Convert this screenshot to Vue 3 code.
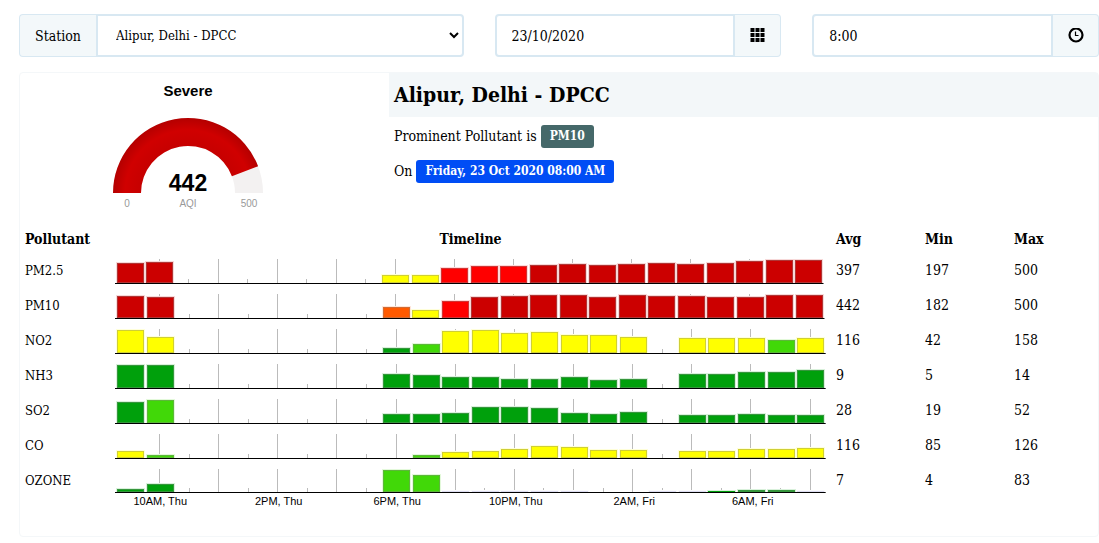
<script setup>
import { ref } from 'vue'

const station = ref('Alipur, Delhi - DPCC')
const date = ref('23/10/2020')
const time = ref('8:00')

const colours = {
  g: '#00a00c',
  l: '#41d808',
  y: '#ffff00',
  o: '#ff5a00',
  r: '#ff0000',
  d: '#cc0000',
  f: '#dcdcf0'
}

const gap = n => Array(n).fill(0)

// heights and shades hold one entry per hour, from 9AM to 8AM
const rows = [
  { name: 'PM2.5', avg: 397, min: 197, max: 500, pitch: 29.48, base: 24,
    heights: [20, 21, ...gap(7), 8, 8, 15, 17, 17, 18, 19, 18, 19, 20, 19, 20, 22, 23, 23],
    shades: 'dd-------yyrrrdddddddddd' },
  { name: 'PM10', avg: 442, min: 182, max: 500, pitch: 29.52, base: 24,
    heights: [22, 21, ...gap(7), 11, 8, 17, 21, 22, 23, 23, 21, 23, 22, 22, 21, 21, 23, 23],
    shades: 'dd-------oyrdddddddddddd' },
  { name: 'NO2', avg: 116, min: 42, max: 158, pitch: 29.57, base: 24,
    heights: [23, 16, ...gap(7), 5, 9, 22, 23, 20, 21, 18, 18, 16, 0, 15, 15, 15, 13, 15],
    shades: 'yy-------glyyyyyyy-yyyly' },
  { name: 'NH3', avg: 9, min: 5, max: 14, pitch: 29.57, base: 24,
    heights: [23, 23, ...gap(7), 14, 13, 11, 11, 9, 9, 11, 8, 9, 0, 14, 14, 16, 16, 18],
    shades: 'gg-------ggggggggg-ggggg' },
  { name: 'SO2', avg: 28, min: 19, max: 52, pitch: 29.57, base: 24,
    heights: [21, 23, ...gap(7), 9, 9, 10, 16, 16, 15, 10, 9, 11, 0, 8, 8, 9, 8, 8],
    shades: 'gl-------ggggggggg-ggggg' },
  { name: 'CO', avg: 116, min: 85, max: 126, pitch: 29.57, base: 24,
    heights: [7, 3, ...gap(7), 0, 3, 6, 7, 9, 12, 11, 8, 8, 0, 7, 7, 9, 9, 10],
    shades: 'yl--------lyyyyyyy-yyyyy' },
  { name: 'OZONE', avg: 7, min: 4, max: 83, pitch: 29.57, base: 23,
    heights: [3, 8, ...gap(7), 22, 17, 1, 1, 1, 1, 1, 0, 0, 1, 1, 1, 2, 2, 1],
    shades: 'gg-------llfffff--ffgggf' }
]

const hours = ['10AM, Thu', '2PM, Thu', '6PM, Thu', '10PM, Thu', '2AM, Fri', '6AM, Fri']

const barX = (row, i) => Math.round(2 + row.pitch * i)
const centre = (row, i) => Math.floor(15 + row.pitch * i)
const bars = row => row.heights
  .map((h, i) => ({ i, h, x: barX(row, i), y: row.base - h, fill: colours[row.shades[i]] }))
  .filter(b => b.h > 0)
</script>

<template>
  <main class="page">
    <form class="controls" @submit.prevent>
      <div class="group">
        <label class="addon" for="station">Station</label>
        <select id="station" v-model="station" class="field select">
          <option>Alipur, Delhi - DPCC</option>
        </select>
      </div>
      <div class="group">
        <input id="date" v-model="date" class="field" type="text" aria-label="Date">
        <button class="addon icon" type="button" aria-label="Choose date">
          <svg width="15" height="15" viewBox="0 0 15 15">
            <template v-for="r in 3" :key="r">
              <rect v-for="c in 3" :key="c" :x="(c - 1) * 5 + 0.5" :y="(r - 1) * 5" width="4" height="4" />
            </template>
          </svg>
        </button>
      </div>
      <div class="group">
        <input id="time" v-model="time" class="field" type="text" aria-label="Time">
        <button class="addon icon" type="button" aria-label="Choose time">
          <svg width="16" height="16" viewBox="0 0 16 16" fill="none" stroke="#000">
            <circle cx="8" cy="7" r="6.5" stroke-width="2.2" />
            <path d="M7.5 3.5V7.5H10.5" stroke-width="1.2" />
          </svg>
        </button>
      </div>
    </form>

    <section class="card">
      <div class="summary">
        <div class="gauge">
          <h2 class="level">Severe</h2>
          <svg class="dial" width="152" height="92" viewBox="0 0 152 92">
            <defs>
              <radialGradient id="red" gradientUnits="userSpaceOnUse" cx="76" cy="76" r="75">
                <stop offset="0.62" stop-color="#c60000" />
                <stop offset="0.84" stop-color="#d00000" />
                <stop offset="1" stop-color="#b40000" />
              </radialGradient>
            </defs>
            <path d="M1 76A75 75 0 0 1 151 76H123A47 47 0 0 0 29 76Z" fill="#f3f1f1" />
            <path d="M1 76A75 75 0 0 1 146.1 49.3L119.9 59.2A47 47 0 0 0 29 76Z" fill="url(#red)" />
            <text class="value" x="76" y="74">442</text>
            <text class="mark" x="15" y="90">0</text>
            <text class="mark" x="76" y="90">AQI</text>
            <text class="mark" x="137" y="90">500</text>
          </svg>
        </div>
        <div class="details">
          <h1 class="title">Alipur, Delhi - DPCC</h1>
          <p class="line">Prominent Pollutant is <span class="badge slate">PM10</span></p>
          <p class="line">On <span class="badge blue">Friday, 23 Oct 2020 08:00 AM</span></p>
        </div>
      </div>

      <table class="data">
        <colgroup>
          <col class="name-col">
          <col>
          <col class="num-col">
          <col class="num-col">
          <col class="num-col">
        </colgroup>
        <thead>
          <tr>
            <th>Pollutant</th>
            <th class="middle">Timeline</th>
            <th>Avg</th>
            <th>Min</th>
            <th>Max</th>
          </tr>
        </thead>
        <tbody>
          <tr v-for="row in rows" :key="row.name">
            <td>{{ row.name }}</td>
            <td class="timeline">
              <svg class="chart" viewBox="0 0 711 25" preserveAspectRatio="none">
                <rect
                  v-for="i in 24" :key="i" class="tick"
                  :x="centre(row, i - 1)" :y="i % 2 ? row.base - 4 : 0"
                  width="1" :height="i % 2 ? 4 : row.base"
                />
                <g v-for="b in bars(row)" :key="b.i">
                  <rect :x="b.x - 1" :y="b.y - 1" width="29" :height="b.h + 1" class="halo-base" />
                  <rect :x="b.x - 1" :y="b.y - 1" width="29" :height="b.h + 1" :fill="b.fill" class="halo" />
                  <rect :x="b.x" :y="b.y" width="27" :height="b.h" :fill="b.fill" />
                  <rect v-if="b.h > 1" :x="b.x + 0.5" :y="b.y + 0.5" width="26" :height="b.h - 1" class="edge" />
                </g>
                <rect x="0" :y="row.base" :width="row.pitch * 24 + 1" height="1" />
              </svg>
              <div v-if="row.name === 'OZONE'" class="axis">
                <span v-for="hour in hours" :key="hour">{{ hour }}</span>
              </div>
            </td>
            <td class="num">{{ row.avg }}</td>
            <td class="num">{{ row.min }}</td>
            <td class="num">{{ row.max }}</td>
          </tr>
        </tbody>
      </table>
    </section>
  </main>
</template>

<style>
body {
  background: #fff;
}
</style>

<style scoped>
.page {
  padding: 14px 0 7px 19px;
  font-family: "DejaVu Serif Condensed", "DejaVu Serif", serif;
  font-size: 13px;
  color: #000;
}

.controls {
  display: grid;
  grid-template-columns: 445fr 287fr 287fr;
  column-gap: 31px;
}

.group {
  display: flex;
  height: 43px;
}

.addon {
  display: flex;
  align-items: center;
  box-sizing: border-box;
  padding: 0 15px;
  border: 1px solid #d8e8f2;
  background: #f3f8fa;
  font-size: 14px;
}

.addon:first-child {
  border-right: 0;
  border-radius: 4px 0 0 4px;
}

.addon:last-child {
  border-left: 0;
  border-radius: 0 4px 4px 0;
}

.icon {
  justify-content: center;
  width: 46px;
  padding: 0;
  color: #000;
}

.field {
  flex: 1;
  min-width: 0;
  box-sizing: border-box;
  padding: 0 15px;
  border: 2px solid #d8e8f2;
  border-radius: 4px 0 0 4px;
  background: #fff;
  color: #000;
  font-family: inherit;
  font-size: 14px;
  outline: none;
}

.select {
  padding: 0 0 0 14px;
  border-radius: 0 4px 4px 0;
  font-size: 13px;
}

.card {
  margin-top: 15px;
  box-sizing: border-box;
  padding-bottom: 27px;
  border: 1px solid #f4f7f9;
  border-radius: 4px;
}

.summary {
  display: flex;
  height: 149px;
}

.gauge {
  display: flex;
  flex-direction: column;
  align-items: center;
  width: 336px;
  margin-right: 33px;
  font-family: "Liberation Sans", sans-serif;
}

.level {
  margin: 9px 0 18px;
  font-size: 15px;
  line-height: 17px;
}

.dial {
  display: block;
}

.value {
  font-size: 23px;
  font-weight: bold;
  text-anchor: middle;
}

.mark {
  font-size: 10px;
  fill: #999;
  text-anchor: middle;
}

.details {
  flex: 1;
}

.title {
  margin: 0 0 8px;
  padding: 0 5px;
  background: #f3f7f9;
  font-size: 21px;
  line-height: 44px;
}

.line {
  margin: 0 5px 12px;
  font-size: 14px;
  line-height: 23px;
}

.badge {
  display: inline-block;
  padding: 0 9px;
  border-radius: 3px;
  color: #fff;
  font-size: 12px;
  font-weight: bold;
  vertical-align: top;
}

.slate {
  background: #456869;
}

.blue {
  background: #004df5;
}

.data {
  width: 100%;
  table-layout: fixed;
  border-collapse: collapse;
}

.name-col {
  width: 90px;
}

.num-col {
  width: 89px;
}

.data th,
.data td {
  height: 35px;
  box-sizing: border-box;
  padding: 6px 5px;
  line-height: 23px;
  text-align: left;
  vertical-align: top;
}

.data th {
  height: 31px;
  padding: 6px 5px 2px;
  font-size: 14px;
}

.data .middle {
  text-align: center;
}

.data .num {
  font-size: 14px;
}

.data .timeline {
  padding: 6px 5px 0;
}

.chart {
  display: block;
  width: 100%;
  height: 25px;
}

.tick {
  fill: #bbb;
}

.halo-base {
  fill: #fff;
}

.halo {
  opacity: 0.15;
}

.edge {
  fill: none;
  stroke: #888;
  stroke-opacity: 0.4;
}

.axis {
  display: grid;
  grid-template-columns: repeat(6, 1fr);
  margin-left: -14px;
  margin-right: 14px;
  font-family: "Liberation Sans", sans-serif;
  font-size: 11px;
  line-height: 15px;
  text-align: center;
}
</style>
